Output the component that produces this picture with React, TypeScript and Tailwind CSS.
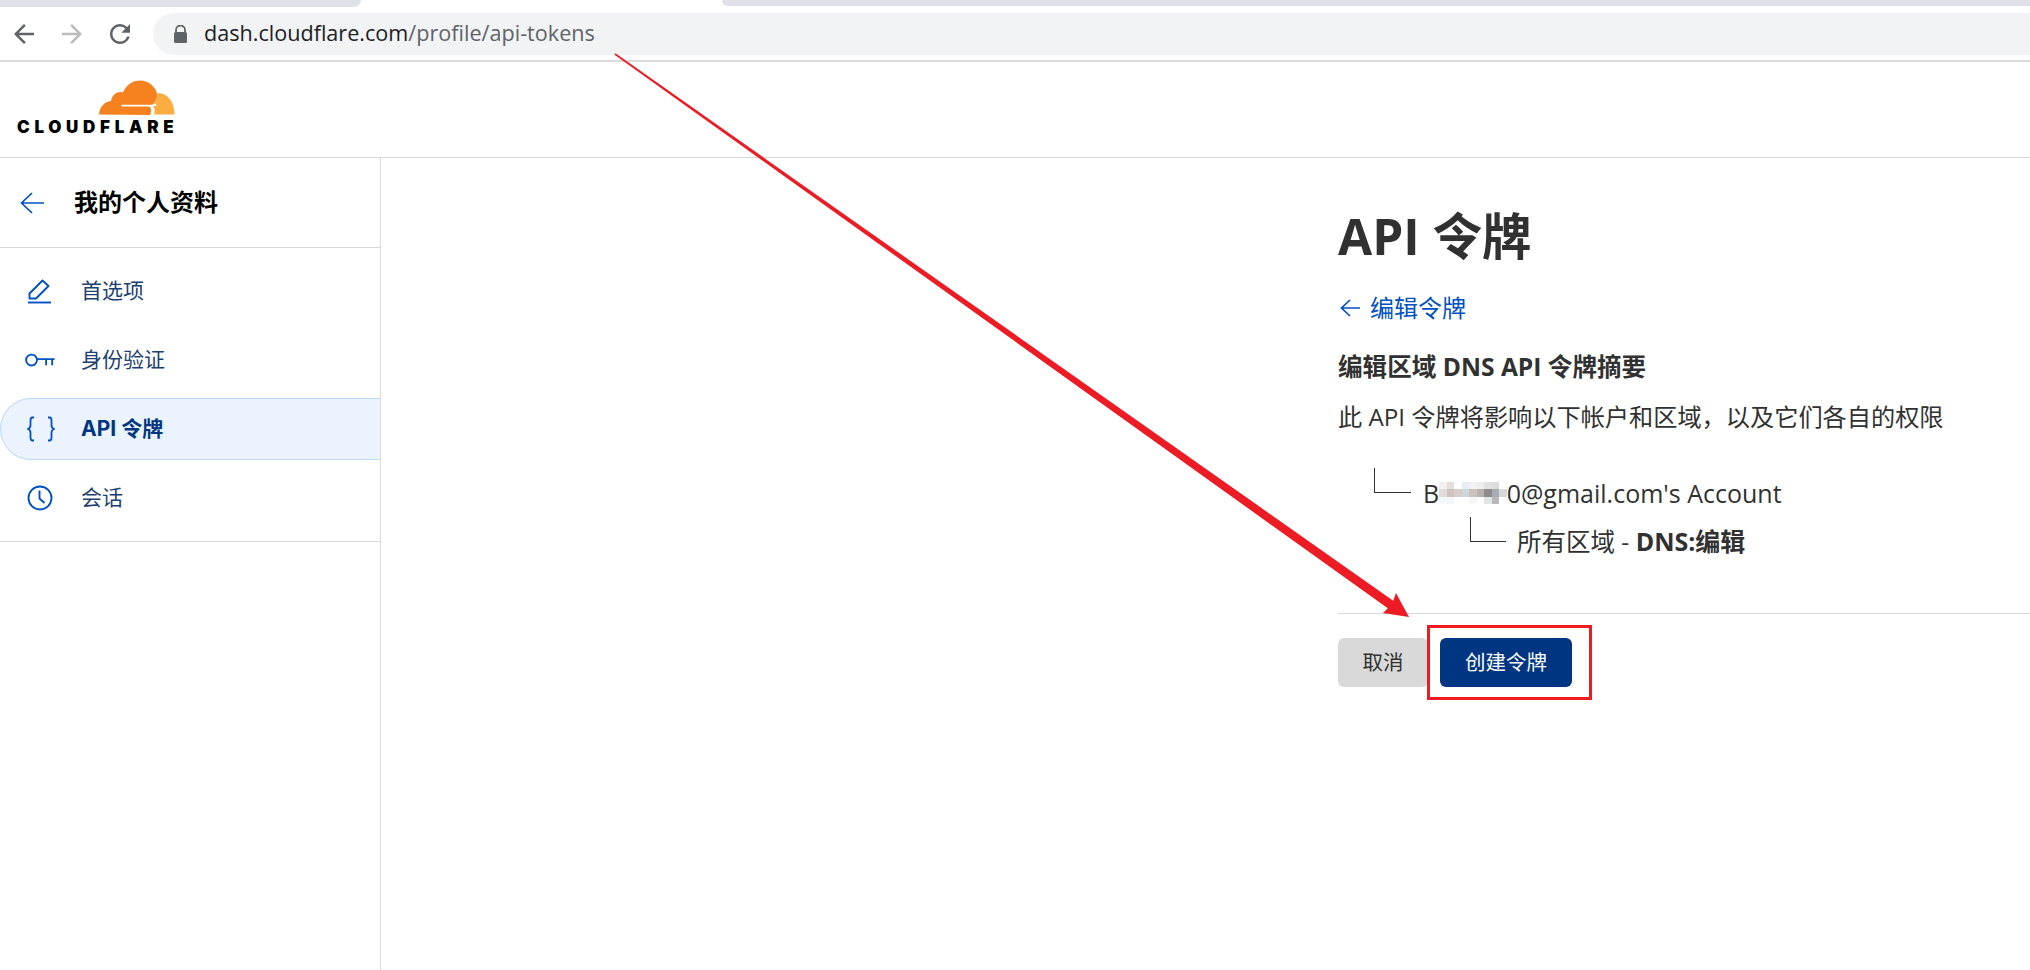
import React from 'react';

const cjk = 'font-["Open_Sans","Noto_Sans_CJK_SC",sans-serif]';

const mosaicCells = [
  'bg-[#f3efec]', 'bg-[#e4dedb]', 'bg-white', 'bg-[#e6ecf3]', 'bg-[#f2f2f2]', 'bg-[#eeeeee]', 'bg-[#e2e2e2]', 'bg-[#dcdcdc]', 'bg-white',
  'bg-[#e0dbd8]', 'bg-[#cfc4bd]', 'bg-[#d8cdc6]', 'bg-[#ced6e2]', 'bg-[#c9c2bd]', 'bg-[#b9b2ae]', 'bg-[#8f8c8e]', 'bg-[#a9abb6]', 'bg-[#d8d8d8]',
  'bg-[#f4f8fa]', 'bg-[#f3f5f6]', 'bg-white', 'bg-white', 'bg-[#f7f7f7]', 'bg-white', 'bg-[#dfe6e4]', 'bg-[#b9b9b9]', 'bg-white',
];

function ChromeIcon({ d, className }: { d: string; className: string }) {
  return (
    <svg width="30" height="30" viewBox="0 0 24 24" fill="currentColor" className={className}>
      <path d={d} />
    </svg>
  );
}

function LongArrow({ w, h, sw }: { w: number; h: number; sw: number }) {
  const mid = h / 2;
  return (
    <svg width={w} height={h} viewBox={`0 0 ${w} ${h}`} fill="none" stroke="#0051c3" strokeWidth={sw}>
      <path d={`M${w} ${mid}H1.500M${mid + 1} 1L1.500 ${mid}l${mid - 0.5} ${mid - 1}`} />
    </svg>
  );
}

function PencilIcon() {
  return (
    <svg width="24" height="26" viewBox="0 0 24 26" fill="none" stroke="#0051c3" strokeWidth="1.900">
      <path d="M1.500 20.500v-5L14.500 2.500l6 5.500L8 20.500z" strokeLinejoin="round" />
      <path d="M0 24.500h23" />
    </svg>
  );
}

function KeyIcon() {
  return (
    <svg width="32" height="16" viewBox="0 0 32 16" fill="none" stroke="#0051c3" strokeWidth="2">
      <circle cx="7" cy="8" r="5.800" />
      <path d="M13 7h18.500M22.500 7v6.500M29 7v6.500" />
    </svg>
  );
}

function BracesIcon() {
  return (
    <svg width="28" height="26" viewBox="0 0 28 26" fill="none" stroke="#0051c3" strokeWidth="1.800">
      <path d="M7 1.500H5.500C3.800 1.500 3.500 3 3.500 4.500V9c0 2-1 3.500-2.500 4 1.500.5 2.500 2 2.500 4v4.500c0 1.500.3 3 2 3H7" />
      <path d="M21 1.500h1.500c1.700 0 2 1.500 2 3V9c0 2 1 3.500 2.500 4-1.500.5-2.500 2-2.500 4v4.500c0 1.500-.3 3-2 3H21" />
    </svg>
  );
}

function ClockIcon() {
  return (
    <svg width="26" height="26" viewBox="0 0 26 26" fill="none" stroke="#0051c3" strokeWidth="1.900">
      <circle cx="13" cy="13" r="11.500" />
      <path d="M12.500 5.500v8l5 4.500" />
    </svg>
  );
}

function CloudflareLogo() {
  return (
    <div className="flex flex-col items-end w-[158px]">
      <svg width="76" height="35" viewBox="0 0 76 35">
        <path
          fill="#f6821f"
          d="M0 34.500C.5 27 5.500 21.500 12 21c.8-6 6.500-10.500 12-8.500C27 5 33.500.5 41 .5c9 0 16.500 6.500 17.500 15.500-.8 3.500-2.500 6.800-5 8.800H22.500v1.800h27c2.500.3 3.300 3.500 1.800 8.400z"
        />
        <path
          fill="#fbad41"
          d="M59 13c9.500 0 16.500 8.500 16.500 21.500H55c1.200-3 1-6-1-8.300 2.200-.2 3.500-.2 3.800-.7-1-1.200-1.500-1.800-2.800-1.800 2.500-2.500 3.500-6.500 4-10.700z"
        />
      </svg>
      <div className='mt-[5px] w-full text-[17px] leading-[14px] font-black tracking-[4.700px] text-black font-["Inter",sans-serif] whitespace-nowrap'>
        CLOUDFLARE
      </div>
    </div>
  );
}

function NavItem({ icon, label, active }: { icon: React.ReactNode; label: string; active?: boolean }) {
  return (
    <div
      className={`flex items-center h-[62px] pl-[25px] -mb-[1px] ${
        active
          ? 'bg-[#ebf3fe] border border-r-0 border-[#bcd8fb] rounded-l-[31px] font-bold text-[#003681]'
          : 'text-[#1d3f72]'
      }`}
    >
      <div className="w-[30px] flex justify-center">{icon}</div>
      <span className={`${active ? 'ml-[25px]' : 'ml-[26px]'} text-[21px]`}>{label}</span>
    </div>
  );
}

function Sidebar() {
  return (
    <aside className='w-[381px] shrink-0 border-r border-[#d9d9d9] font-["Inter","Noto_Sans_CJK_SC",sans-serif]'>
      <div className="h-[90px] flex items-center pl-[20px] border-b border-[#d9d9d9]">
        <LongArrow w={24} h={22} sw={1.7} />
        <span className="ml-[30px] text-[24px] leading-none font-bold text-black">我的个人资料</span>
      </div>
      <div className="pt-[12px] pb-[13px] border-b border-[#d9d9d9]">
        <div className="flex flex-col gap-[8px]">
          <NavItem icon={<PencilIcon />} label="首选项" />
          <NavItem icon={<KeyIcon />} label="身份验证" />
          <NavItem icon={<BracesIcon />} label="API 令牌" active />
          <NavItem icon={<ClockIcon />} label="会话" />
        </div>
      </div>
    </aside>
  );
}

function Elbow({ className }: { className: string }) {
  return <span className={`shrink-0 border-l border-b border-[#333333] h-[25px] mb-[16px] ${className}`} />;
}

function MainPanel() {
  return (
    <main className={`flex-1 pl-[957px] pt-[42px] text-[#313131] ${cjk}`}>
      <h1 className="text-[49.500px] leading-[72px] font-bold">API 令牌</h1>
      <a className="mt-[20px] flex items-center text-[24px] leading-[32px] text-[#0051c3]">
        <span className="ml-[2px] mr-[10px]">
          <LongArrow w={20} h={18} sw={1.7} />
        </span>
        编辑令牌
      </a>
      <h2 className="mt-[27px] text-[24.600px] leading-[32px] font-bold">编辑区域 DNS API 令牌摘要</h2>
      <p className="mt-[18px] text-[24.200px] leading-[32px] whitespace-nowrap">
        此 API 令牌将影响以下帐户和区域{'\uFF0C'}以及它们各自的权限
      </p>
      <div className="mt-[35px] pl-[36px] flex items-end">
        <Elbow className="w-[37px]" />
        <span className="ml-[12px] text-[25px] leading-[32px] flex items-center whitespace-nowrap">
          B
          <span className="inline-grid grid-cols-[repeat(9,7.500px)] grid-rows-[7px_8px_7px]">
            {mosaicCells.map((c, i) => (
              <span key={i} className={c} />
            ))}
          </span>
          0@gmail.com's Account
        </span>
      </div>
      <div className="mt-[8px] pl-[132px] flex items-end">
        <Elbow className="w-[36px]" />
        <span className="ml-[11px] text-[24.500px] leading-[32px] whitespace-nowrap">
          所有区域 - <b className="text-[25px]">DNS:编辑</b>
        </span>
      </div>
      <div className="mt-[55px] border-t border-[#d9d9d9]" />
      <div className="mt-[24px] flex gap-[12px] text-[20.500px]">
        <button className="w-[90px] h-[49px] rounded-[6px] bg-[#d9d9d9] text-[#313131]">取消</button>
        <div className="relative">
          <button className="w-[132px] h-[49px] rounded-[6px] bg-[#003681] text-white">创建令牌</button>
          <span className="absolute -left-[13px] -top-[13px] -bottom-[13px] -right-[20px] border-[3px] border-[#ed1c24]" />
        </div>
      </div>
    </main>
  );
}

export default function App() {
  return (
    <div className="relative w-[2030px] h-[970px] overflow-hidden bg-white flex flex-col">
      <div className="h-[62px] shrink-0 border-b-2 border-[#dcdcdc] relative">
        <div className="absolute left-0 top-0 h-[7px] w-[361px] bg-[#dee1e6] rounded-br-[12px]" />
        <div className="absolute left-[722px] top-0 h-[6px] right-0 bg-[#dee1e6] rounded-bl-[10px]" />
        <div className="h-full flex items-center pt-[7px] pl-[9px]">
          <ChromeIcon
            className="text-[#5f6368]"
            d="M20 11H7.830l5.590-5.590L12 4l-8 8 8 8 1.410-1.410L7.830 13H20v-2z"
          />
          <ChromeIcon
            className="ml-[18px] text-[#babcbe]"
            d="M4 11h12.170l-5.590-5.590L12 4l8 8-8 8-1.410-1.410L16.170 13H4v-2z"
          />
          <ChromeIcon
            className="ml-[18px] text-[#5f6368]"
            d="M17.650 6.350A7.958 7.958 0 0 0 12 4c-4.420 0-7.990 3.580-7.990 8s3.570 8 7.990 8c3.730 0 6.840-2.550 7.730-6h-2.080A5.990 5.990 0 0 1 12 18c-3.310 0-6-2.690-6-6s2.690-6 6-6c1.660 0 3.140.690 4.220 1.780L13 11h7V4l-2.350 2.350z"
          />
          <div className='ml-[18px] flex-1 h-[42px] rounded-l-[21px] bg-[#f1f3f4] flex items-center pl-[20px] font-["Open_Sans",sans-serif] text-[21.600px]'>
            <svg width="15" height="18" viewBox="0 0 15 18" className="shrink-0">
              <path d="M3 7V5a4.500 4.500 0 0 1 9 0v2" fill="none" stroke="#5f6368" strokeWidth="1.800" />
              <rect x="1" y="7" width="13" height="11" rx="1.500" fill="#5f6368" />
            </svg>
            <span className="ml-[16px] text-[#202124]">dash.cloudflare.com</span>
            <span className="text-[#5f6368]">/profile/api-tokens</span>
          </div>
        </div>
      </div>

      <header className="h-[96px] shrink-0 border-b border-[#d9d9d9] flex items-start pt-[18px] pl-[17px]">
        <CloudflareLogo />
      </header>

      <div className="flex flex-1 min-h-0">
        <Sidebar />
        <MainPanel />
      </div>

      <svg className="absolute inset-0 pointer-events-none" width="2030" height="970" viewBox="0 0 2030 970">
        <polygon
          fill="#ed1c24"
          points="615.500,53.300 1393.200,600.700 1396,593 1409,617 1383,613 1387.800,608.300 614.500,54.700"
        />
      </svg>
    </div>
  );
}
